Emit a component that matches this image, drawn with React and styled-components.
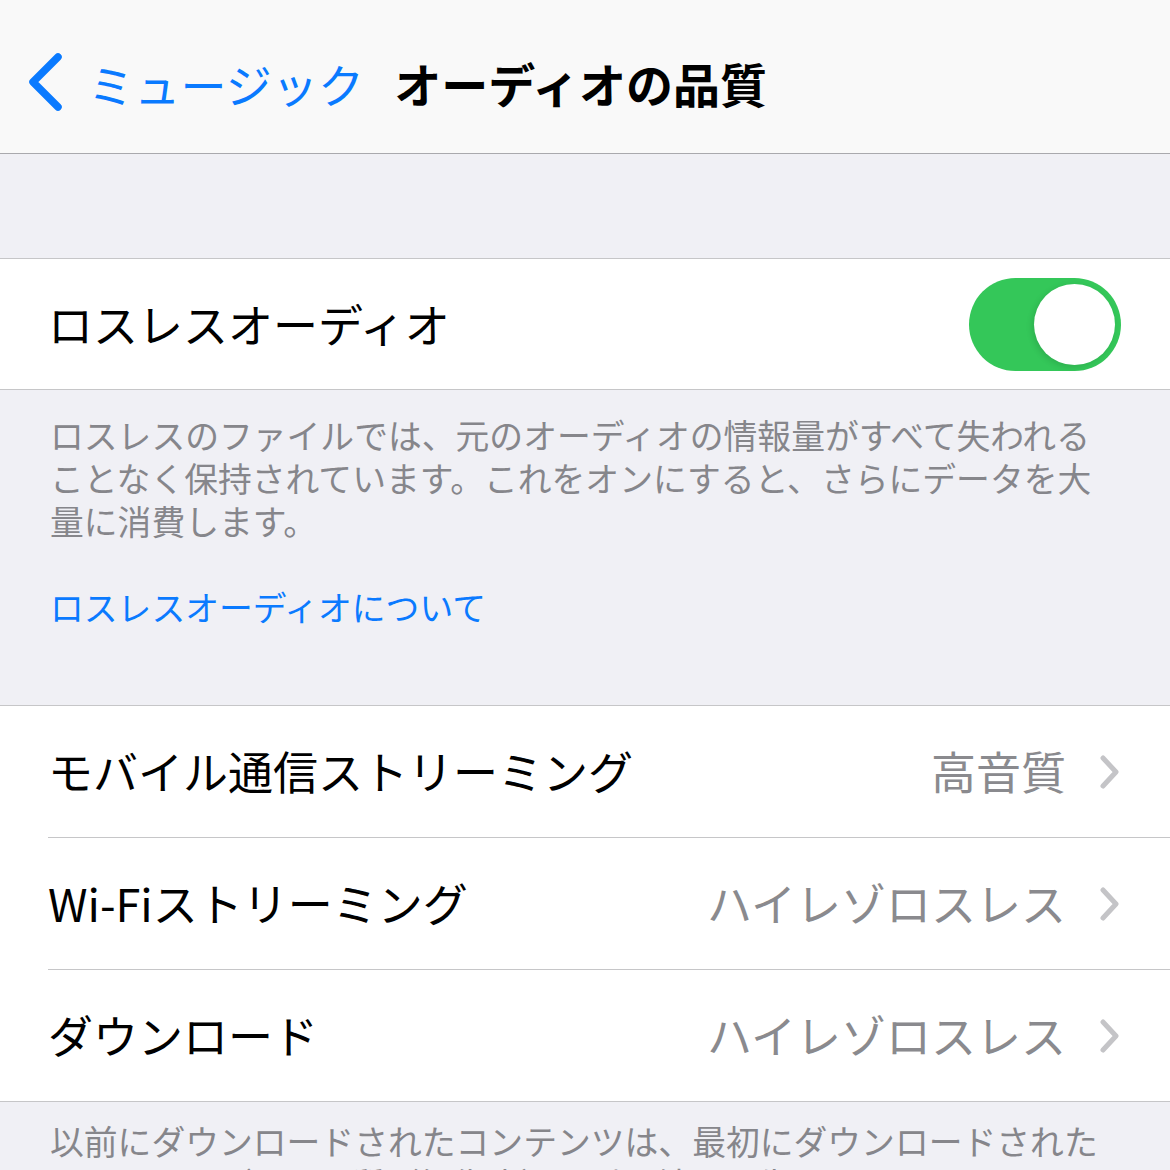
import React from 'react';
import styled, { createGlobalStyle } from 'styled-components';

const GlobalStyle = createGlobalStyle`
  html, body {
    margin: 0;
    padding: 0;
    background: #f0f0f5;
  }
  body {
    font-family: "Noto Sans CJK JP", "Noto Sans", sans-serif;
    -webkit-font-smoothing: antialiased;
  }
`;

const Screen = styled.div`
  width: 1170px;
  height: 1170px;
  overflow: hidden;
  background: #f0f0f5;
  display: flex;
  flex-direction: column;
`;

const NavBar = styled.header`
  height: 153px;
  flex-shrink: 0;
  display: flex;
  align-items: center;
  background: #f9f9f9;
  border-bottom: 1px solid #a9a9ad;
  padding-left: 26px;
  box-sizing: content-box;
`;

const BackButton = styled.div`
  display: flex;
  align-items: center;
  gap: 24px;
  color: #0a7aff;
  font-size: 46px;
  letter-spacing: 0.2px;
  line-height: 1;
  margin-top: 12px;
  svg {
    margin-top: -2px;
  }
`;

const NavTitle = styled.h1`
  margin: 12px 0 0 30px;
  font-size: 47px;
  font-weight: 700;
  color: #000;
  line-height: 1;
`;

const Spacer = styled.div`
  height: ${p => p.h}px;
  flex-shrink: 0;
`;

const Group = styled.section`
  background: #fff;
  border-top: 1px solid #c6c6c8;
  border-bottom: 1px solid #c6c6c8;
  flex-shrink: 0;
`;

const Row = styled.div`
  height: ${p => p.h || 131}px;
  display: flex;
  align-items: center;
  padding: 0 50px 0 50px;
  position: relative;
  & + & {
    margin-top: 1px;
  }
  & + &::before {
    content: '';
    position: absolute;
    left: 48px;
    right: 0;
    top: -1px;
    height: 1px;
    background: #c6c6c8;
  }
`;

const Label = styled.div`
  flex: 1;
  font-size: 45px;
  color: #000;
  line-height: 1;
  margin-top: -2px;
  margin-left: -2px;
`;

const Value = styled.div`
  font-size: 45px;
  color: #8a8a8e;
  line-height: 1;
  margin-top: -2px;
  margin-right: 34px;
`;

const Toggle = styled.div`
  width: 152px;
  height: 93px;
  border-radius: 47px;
  background: #34c759;
  position: relative;
  margin-right: -1px;
`;

const Knob = styled.div`
  position: absolute;
  top: 6px;
  right: 6px;
  width: 81px;
  height: 81px;
  border-radius: 50%;
  background: #fff;
  box-shadow: -2px 2px 6px rgba(0, 0, 0, 0.12);
`;

const Footer = styled.div`
  padding: ${p => p.pad};
  font-size: 33.8px;
  line-height: 43px;
  color: #86868b;
  flex-shrink: 0;
`;

const Paragraph = styled.p`
  margin: 0;
`;

const Link = styled.p`
  margin: 43px 0 0;
  color: #0a7aff;
`;

function Chevron() {
  return (
    <svg width="20" height="34" viewBox="0 0 20 34">
      <path d="M3 3 L16 17 L3 31" fill="none" stroke="#c4c4c7" strokeWidth="5"
        strokeLinecap="round" strokeLinejoin="round" />
    </svg>
  );
}

function BackChevron() {
  return (
    <svg width="38" height="60" viewBox="0 0 38 60">
      <path d="M32 5 L7 30 L32 55" fill="none" stroke="#0a7aff" strokeWidth="7.5"
        strokeLinecap="round" strokeLinejoin="round" />
    </svg>
  );
}

const streamingRows = [
  { label: 'モバイル通信ストリーミング', value: '高音質' },
  { label: 'Wi-Fiストリーミング', value: 'ハイレゾロスレス' },
  { label: 'ダウンロード', value: 'ハイレゾロスレス' },
];

export default function App() {
  return (
    <Screen>
      <GlobalStyle />
      <NavBar>
        <BackButton>
          <BackChevron />
          <span>ミュージック</span>
        </BackButton>
        <NavTitle>オーディオの品質</NavTitle>
      </NavBar>

      <Spacer h={104} />

      <Group>
        <Row h={130}>
          <Label>ロスレスオーディオ</Label>
          <Toggle>
            <Knob />
          </Toggle>
        </Row>
      </Group>

      <Footer pad="23px 60px 77px 50px">
        <Paragraph>
          ロスレスのファイルでは、元のオーディオの情報量がすべて失われることなく保持されています。これをオンにすると、さらにデータを大量に消費します。
        </Paragraph>
        <Link>ロスレスオーディオについて</Link>
      </Footer>

      <Group>
        {streamingRows.map(row => (
          <Row key={row.label}>
            <Label>{row.label}</Label>
            <Value>{row.value}</Value>
            <Chevron />
          </Row>
        ))}
      </Group>

      <Footer pad="17px 60px 20px 50px">
        <Paragraph>
          以前にダウンロードされたコンテンツは、最初にダウンロードされたときのオーディオ品質（解像度）で引き続き再生されます。
        </Paragraph>
      </Footer>
    </Screen>
  );
}
